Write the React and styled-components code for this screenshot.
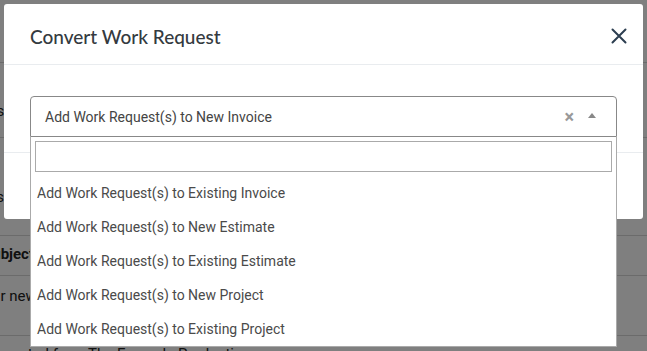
import React from 'react';
import styled, { createGlobalStyle } from 'styled-components';

const GlobalStyle = createGlobalStyle`
  html, body {
    margin: 0;
    padding: 0;
    background: #fff;
    font-family: Roboto, "Liberation Sans", sans-serif;
    overflow: hidden;
  }
`;

const options = [
  'Add Work Request(s) to Existing Invoice',
  'Add Work Request(s) to New Estimate',
  'Add Work Request(s) to Existing Estimate',
  'Add Work Request(s) to New Project',
  'Add Work Request(s) to Existing Project',
];

// page behind the dialog, mostly hidden by it
const rows = [
  { text: 'Requests', bold: false, height: 75, pad: 38, shift: -58 },
  { text: 'Details', bold: false, height: 98, pad: 49, shift: -42 },
  { text: 'Subject', bold: true, height: 40, pad: 8, shift: -17 },
  { text: 'Repair new', bold: false, height: 60, pad: 10, shift: -37 },
  { text: 'Imported from The Example Production', bold: false, height: 40, pad: 8, shift: -12 },
];

class App extends React.Component {
  render() {
    return (
      <>
        <GlobalStyle />
        <Page>
          <Table>
            {rows.map((r, i) => (
              <PageRow key={i} $height={r.height} $pad={r.pad} $bold={r.bold}>
                <Cell $shift={r.shift}>{r.text}</Cell>
              </PageRow>
            ))}
          </Table>
        </Page>
        <Overlay>
          <Modal>
            <Header>
              <Title>Convert Work Request</Title>
              <CloseButton aria-label="close">
                <svg width="16" height="16" viewBox="0 0 16 16">
                  <path d="M1.5 1.5 L14.5 14.5 M14.5 1.5 L1.5 14.5" stroke="#2c3e50" strokeWidth="2" strokeLinecap="round" />
                </svg>
              </CloseButton>
            </Header>
            <Body>
              <SelectWrap>
                <Control>
                  <Value>Add Work Request(s) to New Invoice</Value>
                  <Clear>×</Clear>
                  <Arrow />
                </Control>
                <Dropdown>
                  <Search type="text" />
                  <OptionList>
                    {options.map((o) => (
                      <Option key={o}>{o}</Option>
                    ))}
                  </OptionList>
                </Dropdown>
              </SelectWrap>
            </Body>
            <Footer />
          </Modal>
        </Overlay>
      </>
    );
  }
}

const Page = styled.div`
  padding-top: 62px;
  height: 351px;
  box-sizing: border-box;
  overflow: hidden;
`;

const Table = styled.div`
  display: flex;
  flex-direction: column;
`;

const PageRow = styled.div`
  height: ${(p) => p.$height}px;
  flex-shrink: 0;
  box-sizing: border-box;
  display: flex;
  align-items: flex-start;
  padding-top: ${(p) => p.$pad}px;
  border-top: 1px solid #d6d6d6;
  font-size: 15px;
  line-height: 20px;
  font-weight: ${(p) => (p.$bold ? 700 : 400)};
  color: #222;
  white-space: nowrap;
`;

const Cell = styled.span`
  margin-left: ${(p) => p.$shift}px;
`;

const Overlay = styled.div`
  position: fixed;
  inset: 0;
  background: rgba(0, 0, 0, 0.5);
`;

const Modal = styled.div`
  margin: 4px;
  width: 639px;
  background: #fff;
  border-radius: 3px;
`;

const Header = styled.div`
  height: 60px;
  padding: 0 16px 0 26px;
  display: flex;
  align-items: center;
  justify-content: space-between;
  border-bottom: 1px solid #e9ecef;
`;

const Title = styled.h4`
  margin: 0;
  font-family: Lato, "Open Sans", sans-serif;
  font-size: 19px;
  font-weight: 500;
  color: #343a40;
  padding-top: 4px;
`;

const CloseButton = styled.button`
  border: none;
  background: transparent;
  padding: 0;
  width: 16px;
  height: 16px;
  display: flex;
  margin-top: 4px;
`;

const Body = styled.div`
  padding: 31px 26px 15px;
`;

const SelectWrap = styled.div`
  position: relative;
  width: 587px;
`;

const Control = styled.div`
  height: 39px;
  border: 1px solid #888;
  border-radius: 4px 4px 0 0;
  display: flex;
  align-items: center;
  padding: 0 20px 0 14px;
  color: #444;
  font-size: 14px;
`;

const Value = styled.span`
  flex: 1;
`;

const Clear = styled.span`
  font-size: 18px;
  font-weight: 700;
  color: #999;
  margin-right: 14px;
  line-height: 1;
  padding-top: 1px;
`;

const Arrow = styled.span`
  width: 0;
  height: 0;
  border-left: 4px solid transparent;
  border-right: 4px solid transparent;
  border-bottom: 5px solid #888;
  margin-bottom: 2px;
`;

const Dropdown = styled.div`
  position: absolute;
  top: 100%;
  left: 0;
  right: 0;
  background: #fff;
  border: 1px solid #aaa;
  border-top: none;
  z-index: 2;
`;

const Search = styled.input`
  display: block;
  box-sizing: border-box;
  width: calc(100% - 8px);
  height: 31px;
  margin: 4px;
  border: 1px solid #aaa;
  outline: none;
  padding: 4px;
`;

const OptionList = styled.ul`
  list-style: none;
  margin: 0;
  padding: 0;
`;

const Option = styled.li`
  height: 34px;
  display: flex;
  align-items: center;
  padding: 0 6px;
  font-size: 14px;
  color: #4a4a4a;
`;

const Footer = styled.div`
  height: 66px;
  border-top: 1px solid #e9ecef;
`;

export default App;
